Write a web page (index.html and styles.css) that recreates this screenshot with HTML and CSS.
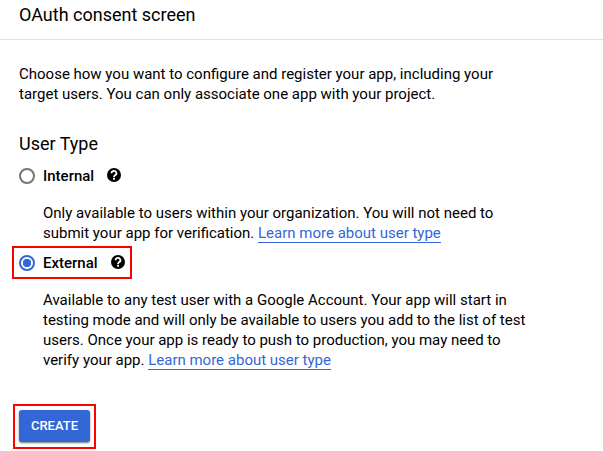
FILE: index.html
```html
<!DOCTYPE html>
<html lang="en">
<head>
<meta charset="utf-8">
<title>OAuth consent screen</title>
<link rel="stylesheet" href="styles.css">
</head>
<body>
<header class="header"><h1 class="title">OAuth consent screen</h1></header>
<main class="content">
  <p class="intro">Choose how you want to configure and register your app, including your<br>target users. You can only associate one app with your project.</p>
  <h2 class="section-title">User Type</h2>
  <div class="option">
    <span class="radio"></span><span class="label">Internal</span>
    <svg class="help" viewBox="0 0 14 14"><circle cx="7" cy="7" r="7"/><path d="M4.6 5.3a2.4 2.3 0 1 1 3.7 1.8Q7 7.9 7 9.2" fill="none" stroke="#fff" stroke-width="1.8"/><path d="M6.1 10h1.8v1.8H6.1z" fill="#fff"/></svg>
  </div>
  <p class="description">Only available to users within your organization. You will not need to<br>submit your app for verification. <a class="link">Learn more about user type</a></p>
  <div class="option option-marked">
    <span class="radio radio-checked"></span><span class="label">External</span>
    <svg class="help" viewBox="0 0 14 14"><circle cx="7" cy="7" r="7"/><path d="M4.6 5.3a2.4 2.3 0 1 1 3.7 1.8Q7 7.9 7 9.2" fill="none" stroke="#fff" stroke-width="1.8"/><path d="M6.1 10h1.8v1.8H6.1z" fill="#fff"/></svg>
  </div>
  <p class="description">Available to any test user with a Google Account. Your app will start in<br>testing mode and will only be available to users you add to the list of test<br>users. Once your app is ready to push to production, you may need to<br>verify your app. <a class="link">Learn more about user type</a></p>
  <div class="action"><button class="create">CREATE</button></div>
</main>
</body>
</html>
```
FILE: styles.css
```css
* { box-sizing: border-box; }
body { margin: 0; height: 451px; overflow: hidden; background: #fff; color: #000; font: 15px/20px Roboto, sans-serif; }
h1, h2, p { margin: 0; font-weight: 400; white-space: nowrap; }
.header { height: 40px; padding: 3px 19px; border-bottom: 1px solid #e0e0e0; }
.title { font-size: 18px; line-height: 24px; }
.content { padding: 24px 12px 0; }
.intro { padding-left: 7px; }
.section-title { margin-top: 28px; padding-left: 7px; font-size: 18px; line-height: 24px; }
.option { display: flex; align-items: center; width: 120px; height: 33px; padding-left: 7px; }
.option:not(.option-marked) { margin-top: 3px; }
.option-marked { padding-left: 5px; border: 2px solid #f00; margin-top: 3px; }
.radio { width: 16px; height: 16px; border: 2px solid #757575; border-radius: 50%; margin-right: 8px; }
.radio-checked { border-color: #3367d6; background: radial-gradient(circle, #3367d6 4px, #fff 4.5px); }
.label { font-weight: 500; }
.help { width: 14px; height: 14px; margin: 0 0 2px 13px; }
.description { margin-top: 11px; padding-left: 31px; }
.link { color: #3367d6; border-bottom: 1px solid #3367d6; }
.action { width: 83px; height: 45px; margin: 34px 0 0 1px; border: 2px solid #f00; padding: 4px; }
.create { display: block; width: 71px; height: 32px; padding: 0; border: 0; border-radius: 3px; background: #3367d6; color: #fff; font: 500 13px/32px Roboto, sans-serif; box-shadow: 0 1px 2px #0008; }
```
